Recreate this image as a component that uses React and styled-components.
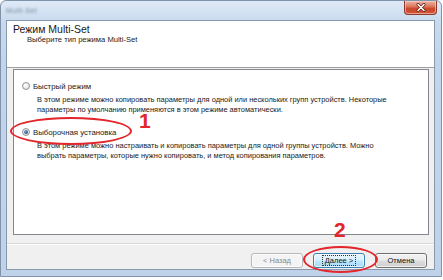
import React from "react";
import styled, { createGlobalStyle } from "styled-components";

const Global = createGlobalStyle`
  html, body { margin: 0; padding: 0; background: #ffffff; }
  body { width: 443px; height: 280px; overflow: hidden; font-family: "Liberation Sans", Arial, sans-serif; }
`;

const Window = styled.div`
  position: relative;
  box-sizing: border-box;
  width: 442px;
  height: 277px;
  border: 1px solid #7f93ab;
  border-radius: 6px 6px 0 0;
  background: linear-gradient(180deg, #dfeaf7 0px, #c9daee 20px, #c2d5ec 60px, #bfd2ea 100%);
  display: flex;
  flex-direction: column;
  padding: 0 6px 6px 5px;
`;

const TitleBar = styled.div`
  height: 19px;
  flex-shrink: 0;
  display: flex;
  align-items: flex-start;
  justify-content: space-between;
`;

const TitleText = styled.span`
  margin-top: 6px;
  font-size: 7px;
  color: #7b8ca1;
  filter: blur(0.8px);
  letter-spacing: 0.4px;
`;

const CloseButton = styled.div`
  width: 33px;
  height: 14px;
  margin-right: -2px;
  box-sizing: border-box;
  border: 1px solid #8c3b2c;
  border-top: none;
  border-radius: 0 0 4px 4px;
  background: linear-gradient(180deg, #eab3a5 0%, #de7c63 40%, #c9452a 60%, #d2583b 100%);
  box-shadow: inset 0 0 0 1px rgba(255, 220, 210, 0.55);
  display: flex;
  align-items: center;
  justify-content: center;
`;

const Client = styled.div`
  flex: 1;
  display: flex;
  flex-direction: column;
  border: 1px solid #8898ad;
  background: #f0f0f0;
  min-height: 0;
`;

const Header = styled.div`
  flex-shrink: 0;
  height: 44px;
  background: #ffffff;
  border-bottom: 1px solid #a0a0a0;
  padding: 2px 0 0 6px;
  box-sizing: content-box;
`;

const HeaderTitle = styled.div`
  font-size: 10.5px;
  line-height: 12px;
  color: #1a1a1a;
`;

const HeaderSub = styled.div`
  font-size: 7.6px;
  line-height: 10px;
  color: #1a1a1a;
  padding-left: 14px;
`;

const Body = styled.div`
  flex-shrink: 0;
  padding: 1px 5px 0 6px;
`;

const Panel = styled.div`
  height: 153px;
  background: #ffffff;
  border: 1px solid #828790;
  padding: 11px 0 0 8px;
  box-sizing: content-box;
`;

const OptionRow = styled.div`
  display: flex;
  align-items: center;
  gap: 3px;
  height: 10px;
  font-size: 7.8px;
  color: #1a1a1a;
  margin-top: ${(p) => (p.$first ? "0" : "12px")};
`;

const Radio = styled.span`
  width: 8px;
  height: 8px;
  box-sizing: border-box;
  border-radius: 50%;
  border: 1px solid #8e9398;
  background: radial-gradient(circle at 40% 35%, #ffffff 0%, #e6e6e6 70%, #d4d4d4 100%);
  display: flex;
  align-items: center;
  justify-content: center;
`;

const RadioDot = styled.span`
  width: 4px;
  height: 4px;
  border-radius: 50%;
  background: radial-gradient(circle at 35% 35%, #7fa4cf 0%, #2c5a8f 60%, #1d3f6b 100%);
`;

const Description = styled.div`
  margin-top: 4px;
  padding-left: 15px;
  font-size: 7.45px;
  line-height: 10px;
  color: #1a1a1a;
  white-space: nowrap;
`;

const Footer = styled.div`
  flex: 1;
  margin-top: 8px;
  border-top: 1px solid #d8d8d8;
  box-shadow: inset 0 1px 0 #ffffff;
  display: flex;
  justify-content: flex-end;
  align-items: flex-start;
  gap: 10px;
  padding: 9px 7px 0 0;
`;

const Button = styled.div`
  width: 52px;
  height: 15px;
  box-sizing: border-box;
  border-radius: 3px;
  font-size: 7.5px;
  display: flex;
  align-items: center;
  justify-content: center;
  border: 1px solid ${(p) => (p.$variant === "disabled" ? "#b4b8bc" : p.$variant === "default" ? "#3c7fb1" : "#707070")};
  color: ${(p) => (p.$variant === "disabled" ? "#8a8a8a" : "#111")};
  background: ${(p) =>
    p.$variant === "disabled"
      ? "#f4f4f4"
      : p.$variant === "default"
      ? "linear-gradient(180deg, #eaf6fd 0%, #d9f0fc 48%, #bee6fd 52%, #a7d9f5 100%)"
      : "linear-gradient(180deg, #f2f2f2 0%, #ebebeb 48%, #dddddd 52%, #cfcfcf 100%)"};
  box-shadow: inset 0 0 0 1px rgba(255, 255, 255, 0.7);
`;

const FocusLabel = styled.span`
  border: 1px dotted #333;
  padding: 0 2px;
  line-height: 9px;
`;

const Ring = styled.div`
  position: absolute;
  box-sizing: border-box;
  border: 2.5px solid #e3262c;
  border-radius: 50%;
`;

const Marker = styled.div`
  position: absolute;
  font-family: "Liberation Sans", Arial, sans-serif;
  font-weight: bold;
  font-size: 21px;
  line-height: 15px;
  color: #e3262c;
`;

export default function App() {
  return (
    <>
      <Global />
      <Window>
        <TitleBar>
          <TitleText>Multi-Set</TitleText>
          <CloseButton>
            <svg width="10" height="9" viewBox="0 0 10 9">
              <path d="M2 1.5 L8 7.5 M8 1.5 L2 7.5" stroke="#5a1d12" strokeWidth="3" strokeLinecap="round" />
              <path d="M2 1.5 L8 7.5 M8 1.5 L2 7.5" stroke="#ffffff" strokeWidth="1.6" strokeLinecap="round" />
            </svg>
          </CloseButton>
        </TitleBar>
        <Client>
          <Header>
            <HeaderTitle>Режим Multi-Set</HeaderTitle>
            <HeaderSub>Выберите тип режима Multi-Set</HeaderSub>
          </Header>
          <Body>
            <Panel>
              <OptionRow $first>
                <Radio />
                <span>Быстрый режим</span>
              </OptionRow>
              <Description>
                В этом режиме можно копировать параметры для одной или нескольких групп устройств. Некоторые
                <br />
                параметры по умолчанию применяются в этом режиме автоматически.
              </Description>
              <OptionRow>
                <Radio>
                  <RadioDot />
                </Radio>
                <span>Выборочная установка</span>
              </OptionRow>
              <Description>
                В этом режиме можно настраивать и копировать параметры для одной группы устройств. Можно
                <br />
                выбрать параметры, которые нужно копировать, и метод копирования параметров.
              </Description>
            </Panel>
          </Body>
          <Footer>
            <Button $variant="disabled">&lt; Назад</Button>
            <Button $variant="default">
              <FocusLabel>Далее &gt;</FocusLabel>
            </Button>
            <Button>Отмена</Button>
          </Footer>
        </Client>
        <Ring style={{ left: 9, top: 116, width: 122, height: 28 }} />
        <Marker style={{ left: 138, top: 112 }}>1</Marker>
        <Ring style={{ left: 302, top: 245, width: 75, height: 27 }} />
        <Marker style={{ left: 333, top: 221 }}>2</Marker>
      </Window>
    </>
  );
}
